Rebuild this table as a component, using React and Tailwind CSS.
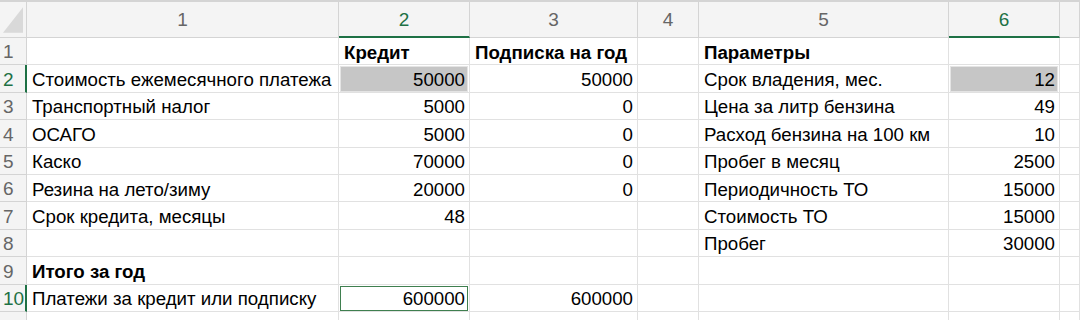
import React from "react";

const GREEN = "text-[#1e7145]";

const rows = [
  { n: 1, c: [{ t: "" }, { t: "Кредит", b: true }, { t: "Подписка на год", b: true }, { t: "" }, { t: "Параметры", b: true }, { t: "" }] },
  { n: 2, sel: true, c: [{ t: "Стоимость ежемесячного платежа" }, { t: "50000", r: true, hl: true }, { t: "50000", r: true }, { t: "" }, { t: "Срок владения, мес." }, { t: "12", r: true, hl: true }] },
  { n: 3, c: [{ t: "Транспортный налог" }, { t: "5000", r: true }, { t: "0", r: true }, { t: "" }, { t: "Цена за литр бензина" }, { t: "49", r: true }] },
  { n: 4, c: [{ t: "ОСАГО" }, { t: "5000", r: true }, { t: "0", r: true }, { t: "" }, { t: "Расход бензина на 100 км" }, { t: "10", r: true }] },
  { n: 5, c: [{ t: "Каско" }, { t: "70000", r: true }, { t: "0", r: true }, { t: "" }, { t: "Пробег в месяц" }, { t: "2500", r: true }] },
  { n: 6, c: [{ t: "Резина на лето/зиму" }, { t: "20000", r: true }, { t: "0", r: true }, { t: "" }, { t: "Периодичность ТО" }, { t: "15000", r: true }] },
  { n: 7, c: [{ t: "Срок кредита, месяцы" }, { t: "48", r: true }, { t: "" }, { t: "" }, { t: "Стоимость ТО" }, { t: "15000", r: true }] },
  { n: 8, c: [{ t: "" }, { t: "" }, { t: "" }, { t: "" }, { t: "Пробег" }, { t: "30000", r: true }] },
  { n: 9, c: [{ t: "Итого за год", b: true }, { t: "" }, { t: "" }, { t: "" }, { t: "" }, { t: "" }] },
  { n: 10, sel: true, c: [{ t: "Платежи за кредит или подписку" }, { t: "600000", r: true, box: true }, { t: "600000", r: true }, { t: "" }, { t: "" }, { t: "" }] },
];

const cols = ["1", "2", "3", "4", "5", "6", ""];
const selCols = ["2", "6"];

function Cell({ c }) {
  return (
    <div className="relative h-[27.4px] border-r border-b border-[#e1e1e1] bg-white">
      {c.hl && <div className="absolute inset-x-px top-px bottom-0 bg-[#c6c6c6] border border-[#e4e4e4]" />}
      {c.box && <div className="absolute inset-x-px top-px bottom-0 border border-[#3f7f4f]" />}
      <div
        className={`relative h-full flex items-center pt-[3px] whitespace-nowrap overflow-visible text-[18.7px] text-black ${c.r ? "justify-end pr-[4px]" : "pl-[5px]"} ${c.b ? "font-bold" : ""}`}
      >
        {c.t}
      </div>
    </div>
  );
}

export default function App() {
  return (
    <div
      className="w-[1080px] h-[320px] overflow-hidden bg-white border-t-2 border-[#d4d4d4]"
      style={{ fontFamily: '"Liberation Sans", Arial, sans-serif' }}
    >
      <div className="grid grid-cols-[27px_312px_131px_168px_61px_250px_111px_20px]">
        <div className="h-[36px] bg-[#f4f4f4] border-r border-b border-[#d4d4d4] flex items-end justify-end p-[3px]">
          <svg width="22" height="28" viewBox="0 0 22 28">
            <polygon points="0,28 22,28 22,0" fill="#d9d9d9" />
          </svg>
        </div>
        {cols.map((h, i) => {
          const s = selCols.includes(h);
          return (
            <div
              key={i}
              className={`h-[36px] bg-[#f4f4f4] border-r border-[#d4d4d4] flex items-center justify-center pt-[2px] text-[19px] ${s ? "text-[#1e7145] border-b-2 border-b-[#1e7145]" : "text-[#666] border-b border-b-[#d4d4d4]"}`}
            >
              {h}
            </div>
          );
        })}
        {rows.map((r) => (
          <React.Fragment key={r.n}>
            <div
              className={`h-[27.4px] bg-[#f4f4f4] border-b border-[#d4d4d4] flex items-center pl-[3px] pt-[3px] text-[19px] ${r.sel ? `${GREEN} border-r-2 border-r-[#1e7145]` : "text-[#666] border-r border-r-[#d4d4d4]"}`}
            >
              {r.n}
            </div>
            {r.c.map((c, i) => (
              <Cell key={i} c={c} />
            ))}
            <Cell c={{ t: "" }} />
          </React.Fragment>
        ))}
        <div className="h-[27.4px] bg-[#f4f4f4] border-r border-[#d4d4d4]" />
        {cols.map((_, i) => (
          <div key={i} className="h-[27.4px] border-r border-[#e1e1e1]" />
        ))}
      </div>
    </div>
  );
}
